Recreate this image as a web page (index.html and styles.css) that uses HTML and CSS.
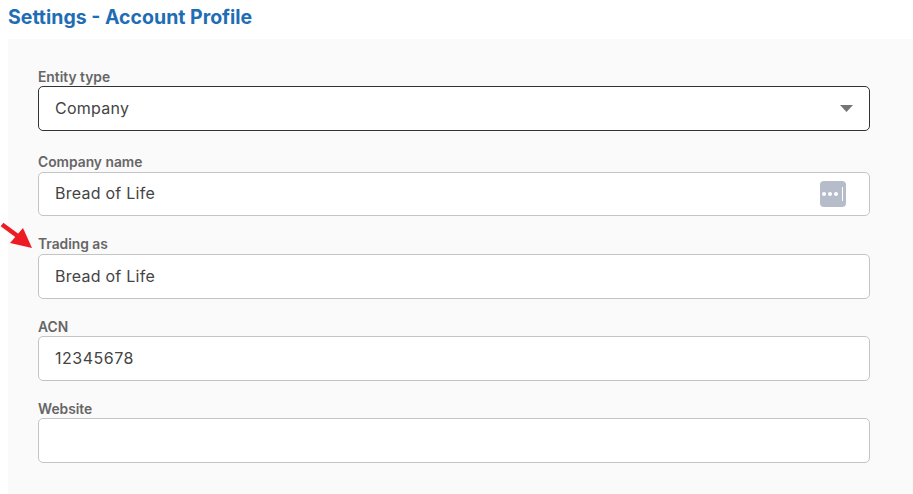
FILE: index.html
```html
<!DOCTYPE html>
<html lang="en">
<head>
<meta charset="utf-8">
<title>Settings - Account Profile</title>
<link rel="stylesheet" href="styles.css">
</head>
<body>
<h1 class="title">Settings - Account Profile</h1>
<main class="panel">
  <div class="field field-select">
    <div class="label">Entity type</div>
    <div class="control control-active"><span>Company</span>
      <svg class="caret" width="13" height="7" viewBox="0 0 13 7"><path d="M0 0h13L6.500 7z" fill="#757575"/></svg>
    </div>
  </div>
  <div class="field field-short">
    <div class="label label-tight">Company name</div>
    <div class="control"><span>Bread of Life</span>
      <svg class="dots" width="26" height="26" viewBox="0 0 26 26"><rect width="26" height="26" rx="4" fill="#b6bcc9"/><circle cx="4" cy="13" r="2" fill="#fff"/><circle cx="10" cy="13" r="2" fill="#fff"/><circle cx="16" cy="13" r="2" fill="#fff"/><rect x="22" y="6" width="1" height="14" fill="#fff"/></svg>
    </div>
  </div>
  <div class="field">
    <div class="label label-tight">Trading as</div>
    <div class="control"><span>Bread of Life</span></div>
    <svg class="arrow" width="34" height="34" viewBox="0 0 34 34"><path d="M2 8.500l17 12.500" stroke="#ed1c24" stroke-width="4.500" fill="none"/><path d="M32 32L10 27l13-15z" fill="#ed1c24"/></svg>
  </div>
  <div class="field">
    <div class="label">ACN</div>
    <div class="control"><span class="number">12345678</span></div>
  </div>
  <div class="field">
    <div class="label">Website</div>
    <div class="control"></div>
  </div>
</main>
</body>
</html>
```
FILE: styles.css
```css
* { box-sizing: border-box; }
html, body { margin: 0; padding: 0; }
body {
  width: 913px;
  height: 494px;
  overflow: hidden;
  background: #fff;
  font-family: Inter, "Liberation Sans", sans-serif;
}
.title {
  margin: 0;
  height: 39px;
  padding: 6px 0 0 8px;
  font-size: 19.500px;
  line-height: 22px;
  font-weight: 700;
  color: #1f6db5;
}
.panel {
  margin-left: 8px;
  height: 455px;
  padding: 30px 43px 0 30px;
  background: #fafafa;
  display: flex;
  flex-direction: column;
  gap: 20px;
}
.field { position: relative; }
.field-select { margin-bottom: 4px; }
.field-short { margin-bottom: 1px; }
.field-short .control { height: 44px; padding-bottom: 2px; }
.field-short .dots { margin-bottom: -2px; }
.label {
  height: 17px;
  font-size: 13.800px;
  line-height: 16px;
  font-weight: 600;
  color: #666;
}
.label-tight { line-height: 14px; }
.control {
  height: 45px;
  padding: 0 16px 1px;
  display: flex;
  align-items: center;
  justify-content: space-between;
  background: #fff;
  border: 1px solid #c4c4c4;
  border-radius: 5px;
  font-size: 16px;
  letter-spacing: 0.25px;
  color: #444;
}
.control-active { border-color: #333; }
.number { letter-spacing: 0.5px; }
.dots { margin-right: 7px; }
.arrow { position: absolute; left: -38px; top: -21px; }
```
